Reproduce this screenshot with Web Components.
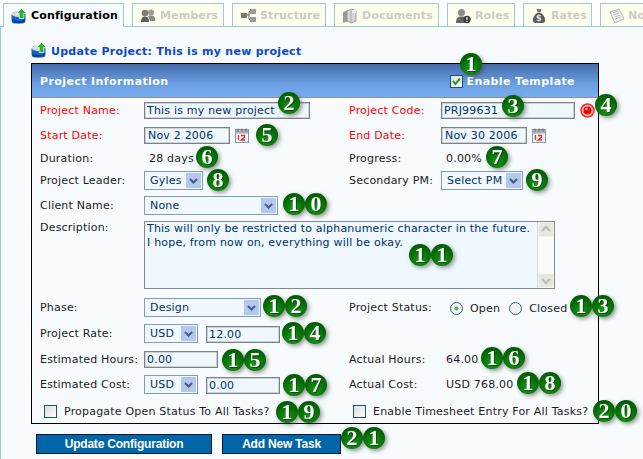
<!DOCTYPE html>
<html>
<head>
<meta charset="utf-8">
<title>Update Project</title>
<style>
  html, body { margin: 0; padding: 0; height: 459px; overflow: hidden; background: #fff; }
  body { position: relative; font: 11px "DejaVu Sans", sans-serif; letter-spacing: .2px; color: #1c1c1c; }
</style>
</head>
<body>

<tab-bar>
  <project-tab active icon="config" w="121">Configuration</project-tab>
  <project-tab icon="members" w="92">Members</project-tab>
  <project-tab icon="structure" w="94">Structure</project-tab>
  <project-tab icon="documents" w="105">Documents</project-tab>
  <project-tab icon="roles" w="68">Roles</project-tab>
  <project-tab icon="rates" w="69">Rates</project-tab>
  <project-tab icon="notes" w="70">No</project-tab>
</tab-bar>
<tab-panel>
  <project-form></project-form>
</tab-panel>

<step-badge n="1" x="471" y="64"></step-badge>
<step-badge n="2" x="289" y="103"></step-badge>
<step-badge n="3" x="513" y="106"></step-badge>
<step-badge n="4" x="606" y="105"></step-badge>
<step-badge n="5" x="267" y="135"></step-badge>
<step-badge n="6" x="207" y="157"></step-badge>
<step-badge n="7" x="497" y="157"></step-badge>
<step-badge n="8" x="218" y="180"></step-badge>
<step-badge n="9" x="537" y="180"></step-badge>
<step-badge n="10" x="294" y="204"></step-badge>
<step-badge n="11" x="420" y="255"></step-badge>
<step-badge n="12" x="274" y="306"></step-badge>
<step-badge n="13" x="581" y="306"></step-badge>
<step-badge n="14" x="293" y="333"></step-badge>
<step-badge n="15" x="233" y="360"></step-badge>
<step-badge n="16" x="492" y="358"></step-badge>
<step-badge n="17" x="294" y="385"></step-badge>
<step-badge n="18" x="528" y="383"></step-badge>
<step-badge n="19" x="287" y="412"></step-badge>
<step-badge n="20" x="604" y="411"></step-badge>
<step-badge n="21" x="352" y="438"></step-badge>

<script>
const ICONS = {
  config: `<rect x="0.500" y="4" width="14" height="11.500" rx="3.500" fill="#1660c8"/><path d="M1 11c2 2.500 10 2.500 13 0v2c-2 3-11 3-13 0z" fill="#0b3f96"/><ellipse cx="7" cy="6" rx="6.300" ry="3" fill="#d5dbe2"/><path d="M10.500 .5l5 5h-2.700v5h-4.600v-5H5.500z" fill="#2fb52a" stroke="#fff" stroke-width=".7"/>`,
  members: `<circle cx="5" cy="5" r="3.300" fill="#7c7c7c"/><circle cx="11" cy="4.500" r="3" fill="#9a9a9a"/><path d="M1 14c0-4 1.500-5.500 4-5.500s4 1.500 4 5.500z" fill="#5e5e5e"/><path d="M8 8c2-1 6-1 7 1.500v3.500h-5z" fill="#8a8a8a"/>`,
  structure: `<rect x="1" y="5" width="6" height="5" fill="#777"/><rect x="10" y="1" width="6" height="5" fill="#999"/><rect x="10" y="9" width="6" height="5" fill="#999"/><path d="M7 7h2M9 3.500h1M9 11.500h1M9 3.500v8" stroke="#666" fill="none"/>`,
  documents: `<path d="M1 4l5-2v11l-5 2z" fill="#9a9a9a"/><path d="M5 3l5-2 4 2v10l-5 2-4-2z" fill="#d6d6d6" stroke="#8a8a8a" stroke-width=".8"/><path d="M9 3v11" stroke="#aaa"/><path d="M10 2h4v3h-4z" fill="#eee"/>`,
  roles: `<circle cx="6.500" cy="4.500" r="3.500" fill="#8a8a8a"/><path d="M1 15c0-5 2-6.500 5.500-6.500S12 10 12 15z" fill="#666"/><circle cx="12" cy="11.500" r="3.700" fill="#3c3c3c"/><path d="M12 9v3M12 13v1" stroke="#fff" stroke-width="1.200"/>`,
  rates: `<path d="M5.500 1h5l-1 3.500h-3z" fill="#777"/><path d="M6 5h4c3 2 4.500 5 4 8-.3 1.500-1.500 2-3 2H5c-1.500 0-2.700-.5-3-2-.5-3 1-6 4-8z" fill="#5c5c5c"/><text x="8" y="13" font-size="8" font-weight="700" text-anchor="middle" fill="#e2e2e2" font-family="DejaVu Sans">$</text>`,
  notes: `<path d="M2 4l9-3 5 10-9 4z" fill="#f2f2ea" stroke="#b5b5b5"/><path d="M4.500 5l6-2M5.500 7l6-2M6.500 9l6-2M7.500 11l5-2" stroke="#bbb"/>`
}

class TabBar extends HTMLElement {
  constructor() {
    super();
    this.attachShadow({ mode: 'open' }).innerHTML = `
      <style>
        :host { display: flex; gap: 8px; height: 26px; padding: 3px 0 0 3px; box-sizing: border-box; background: #fff; white-space: nowrap; }
      </style>
      <slot></slot>`;
  }
}

class ProjectTab extends HTMLElement {
  constructor() {
    super();
    this.attachShadow({ mode: 'open' });
  }
  connectedCallback() {
    const active = this.hasAttribute('active');
    const icon = this.getAttribute('icon');
    this.shadowRoot.innerHTML = `
      <style>
        :host { display: flex; align-items: center; box-sizing: border-box; flex: none; width: ${this.getAttribute('w')}px;
          height: ${active ? 24 : 23}px; padding: ${active ? 0 : 1}px 0 0 7px; gap: 4px; position: relative; z-index: 1;
          border: 1px solid #97cfcf; border-bottom: none;
          background: ${active ? '#f7fbfe' : '#ffffee'}; }
        span { font: bold 11px "DejaVu Sans", sans-serif; letter-spacing: .15px; color: ${active ? '#000' : '#cbcbcb'}; }
        svg { width: 16px; height: 16px; flex: none; }
      </style>
      <svg viewBox="0 0 16 16">${ICONS[icon]}</svg><span><slot></slot></span>`;
  }
}

class TabPanel extends HTMLElement {
  constructor() {
    super();
    this.attachShadow({ mode: 'open' }).innerHTML = `
      <style>
        :host { display: block; height: 433px; box-sizing: border-box; border-top: 1px solid #97cfcf; border-left: 1px solid #97cfcf;
          background: #f7fbfe; padding: 15px 0 0 30px; }
      </style>
      <slot></slot>`;
  }
}

// text box, looks like the old skinned input
class TextBox extends HTMLElement {
  constructor() {
    super();
    this.attachShadow({ mode: 'open' }).innerHTML = `
      <style>
        :host { display: inline-flex; align-items: center; box-sizing: border-box; border: 1px solid #7d8487; box-shadow: inset 0 0 0 .5px #a9adb0;
          height: 17px; padding-left: 2px; background: #eff7ff; color: #003366; font-size: 11px; white-space: pre; overflow: hidden; }
      </style>
      <slot></slot>`;
  }
}

class SelectBox extends HTMLElement {
  constructor() {
    super();
    this.attachShadow({ mode: 'open' }).innerHTML = `
      <style>
        :host { display: inline-flex; align-items: center; justify-content: space-between; box-sizing: border-box; height: 19px;
          border: 1px solid #7f9db9; background: #f2f8ff; color: #003366; font-size: 11px; padding: 0 1px 0 5px; }
        i { display: block; width: 15px; height: 15px; background: #b4c8ee; }
        svg { display: block; width: 15px; height: 15px; }
      </style>
      <slot></slot><i><svg viewBox="0 0 15 15"><path d="M4 6l3.500 3.500L11 6" fill="none" stroke="#445a88" stroke-width="2"/></svg></i>`;
  }
}

class CheckBox extends HTMLElement {
  constructor() {
    super();
    const tick = this.hasAttribute('checked') ? '<svg viewBox="0 0 11 11"><path d="M2 5l2.500 3L9 2.500" fill="none" stroke="#21a121" stroke-width="2"/></svg>' : '';
    this.attachShadow({ mode: 'open' }).innerHTML = `
      <style>
        :host { display: inline-block; box-sizing: border-box; width: 13px; height: 13px; border: 1px solid #1c5180; background: linear-gradient(135deg, #dcdcd7, #fff); flex: none; }
        svg { display: block; width: 11px; height: 11px; }
      </style>${tick}`;
  }
}

class RadioDot extends HTMLElement {
  constructor() {
    super();
    const dot = this.hasAttribute('checked') ? '<circle cx="6.500" cy="6.500" r="2" fill="#46b946"/>' : '';
    this.attachShadow({ mode: 'open' }).innerHTML = `
      <style>
        :host { display: inline-block; width: 13px; height: 13px; flex: none; margin-top: 2px; }
        svg { display: block; width: 13px; height: 13px; }
      </style>
      <svg viewBox="0 0 13 13"><circle cx="6.500" cy="6.500" r="6" fill="#f4f4ef" stroke="#2c5f93"/>${dot}</svg>`;
  }
}

class CalendarIcon extends HTMLElement {
  constructor() {
    super();
    this.attachShadow({ mode: 'open' }).innerHTML = `
      <style>
        :host { display: inline-block; width: 14px; height: 15px; flex: none; }
        svg { display: block; width: 14px; height: 15px; }
      </style>
      <svg viewBox="0 0 14 15"><rect x=".5" y="1.500" width="13" height="13" fill="#eef2fa" stroke="#8c96a8"/><rect x="1" y="2" width="12" height="3.500" fill="#a8afba"/><path d="M3 .5v3M7 .5v3M11 .5v3" stroke="#666"/><path d="M3.500 7v5M6 7.500h3.500v1.700L6 12h4" fill="none" stroke="#ee3322" stroke-width="1.300"/></svg>`;
  }
}

class RequiredIcon extends HTMLElement {
  constructor() {
    super();
    this.attachShadow({ mode: 'open' }).innerHTML = `
      <style>
        :host { display: inline-block; width: 15px; height: 15px; flex: none; }
        svg { display: block; width: 15px; height: 15px; }
      </style>
      <svg viewBox="0 0 15 15"><circle cx="7.500" cy="7.500" r="6.500" fill="#f8b8b8" stroke="#ee2a2a" stroke-width="1.500"/><circle cx="7.500" cy="7.500" r="4" fill="#d80c0c"/><circle cx="6.500" cy="6" r="1.300" fill="#ffa0a0"/></svg>`;
  }
}

class ActionButton extends HTMLElement {
  constructor() {
    super();
    this.attachShadow({ mode: 'open' }).innerHTML = `
      <style>
        :host { display: flex; align-items: center; justify-content: center; box-sizing: border-box; height: 20px; border: 1px solid #001a33;
          background: #0066aa; color: #fff; font: bold 12px "Liberation Sans", sans-serif; letter-spacing: -.2px; }
      </style>
      <slot></slot>`;
  }
}

class FormRow extends HTMLElement {
  constructor() {
    super();
    this.attachShadow({ mode: 'open' }).innerHTML = `
      <style>
        :host { display: grid; grid-template-columns: 104px 205px 92px 1fr; align-items: center; padding-left: 8px; height: var(--h, 25px); }
        div { display: flex; align-items: center; gap: 8px; }
      </style>
      <div><slot name="label"></slot></div><div><slot name="value"></slot></div>
      <div><slot name="label2"></slot></div><div><slot name="value2"></slot></div>`;
  }
}

class ProjectForm extends HTMLElement {
  constructor() {
    super();
    this.attachShadow({ mode: 'open' }).innerHTML = `
      <style>
        :host { display: block; }
        h1 { display: flex; align-items: center; gap: 4px; margin: 0 0 5px; height: 16px; font: bold 11px "DejaVu Sans", sans-serif; letter-spacing: .27px; color: #0b48c4; }
        h1 svg { width: 16px; height: 16px; }
        h1 span { margin-top: 2px; }
        .box { box-sizing: border-box; width: 568px; height: 361px; border: 1px solid #000; background: #f7fbfe; }
        .head { display: flex; align-items: center; justify-content: space-between; box-sizing: border-box; height: 33px; padding: 2px 23px 0 8px;
          background: linear-gradient(#466cac, #6a9ee2 60%, #78aff0); color: #fff; font-weight: bold; letter-spacing: .4px; }
        .line { height: 1px; background: #8a8f96; }
        .head label { display: flex; align-items: center; gap: 4px; }
        .red { color: #f00; }
        .low { margin-top: 2px; }
        .textarea { display: block; position: relative; box-sizing: border-box; width: 411px; height: 68px; margin-top: 3px; border: 1px solid #85898c; background: #eff7ff;
          color: #003366; padding: 0 2px; line-height: 14px; white-space: pre; overflow: hidden; }
        .bar { position: absolute; top: 0; right: 0; width: 16px; height: 100%; display: flex; flex-direction: column; justify-content: space-between;
          background: #fafbfa; border-left: 1px solid #d8d8d0; }
        .bar i { display: block; height: 15px; background: #e4e8e2; border: 1px solid #f6f6f0; box-sizing: border-box; }
        .bar svg { display: block; width: 14px; height: 13px; }
        .check { display: flex; align-items: center; gap: 7px; white-space: nowrap; }
        .left { padding-left: 4px; }
        .buttons { display: flex; gap: 10px; margin: 10px 0 0 5px; }
        .open { display: flex; align-items: center; gap: 7px; margin-left: 9px; }
        .open span { margin-top: 3px; margin-right: 2px; }
        .desc-row { display: grid; grid-template-columns: 104px 1fr; padding-left: 8px; height: 76px; }
      </style>
      <h1><svg viewBox="0 0 16 16">${ICONS.config}</svg><span>Update Project: This is my new project</span></h1>
      <div class="box">
        <div class="head">
          <span>Project Information</span>
          <label><check-box checked></check-box>Enable Template</label>
        </div>
        <div class="line"></div>
        <form-row style="--h:25px">
          <span slot="label" class="red">Project Name:</span>
          <text-box slot="value" style="width:166px">This is my new project</text-box>
          <span slot="label2" class="red">Project Code:</span>
          <text-box slot="value2" style="width:134px">PRJ99631</text-box>
          <required-icon slot="value2" style="margin-left:-3px"></required-icon>
        </form-row>
        <form-row style="--h:25px">
          <span slot="label" class="red">Start Date:</span>
          <text-box slot="value" style="width:86px;padding-left:3px">Nov 2 2006</text-box>
          <calendar-icon slot="value" style="margin-left:-3px"></calendar-icon>
          <span slot="label2" class="red">End Date:</span>
          <text-box slot="value2" style="width:86px;padding-left:3px">Nov 30 2006</text-box>
          <calendar-icon slot="value2" style="margin-left:-3px"></calendar-icon>
        </form-row>
        <form-row style="--h:20px">
          <span slot="label">Duration:</span>
          <span slot="value" style="margin-left:5px">28 days</span>
          <span slot="label2">Progress:</span>
          <span slot="value2" style="margin-left:5px">0.00%</span>
        </form-row>
        <form-row style="--h:24px">
          <span slot="label">Project Leader:</span>
          <select-box slot="value" style="width:59px">Gyles</select-box>
          <span slot="label2">Secondary PM:</span>
          <select-box slot="value2" style="width:82px">Select PM</select-box>
        </form-row>
        <form-row style="--h:26px">
          <span slot="label">Client Name:</span>
          <select-box slot="value" style="width:134px">None</select-box>
        </form-row>
        <div class="desc-row">
          <span style="margin-top:3px">Description:</span>
          <div class="textarea">This will only be restricted to alphanumeric character in the future.
I hope, from now on, everything will be okay.<div class="bar"><i><svg viewBox="0 0 14 13"><path d="M3 8l4-4 4 4" fill="none" stroke="#b9bdb4" stroke-width="2"/></svg></i><i><svg viewBox="0 0 14 13"><path d="M3 5l4 4 4-4" fill="none" stroke="#b9bdb4" stroke-width="2"/></svg></i></div></div>
        </div>
        <form-row style="--h:26px">
          <span slot="label">Phase:</span>
          <select-box slot="value" style="width:117px">Design</select-box>
          <span slot="label2">Project Status:</span>
          <div slot="value2" class="open"><radio-dot checked></radio-dot><span>Open</span><radio-dot></radio-dot><span>Closed</span></div>
        </form-row>
        <form-row style="--h:26px">
          <span slot="label">Project Rate:</span>
          <select-box slot="value" style="width:54px">USD</select-box>
          <text-box slot="value" style="width:74px;margin-top:2px">12.00</text-box>
        </form-row>
        <form-row style="--h:25px">
          <span slot="label" class="low">Estimated Hours:</span>
          <text-box slot="value" class="low" style="width:74px">0.00</text-box>
          <span slot="label2" class="low">Actual Hours:</span>
          <span slot="value2" class="low" style="margin-left:5px">64.00</span>
        </form-row>
        <form-row style="--h:26px">
          <span slot="label">Estimated Cost:</span>
          <select-box slot="value" style="width:54px">USD</select-box>
          <text-box slot="value" style="width:74px;margin-top:2px">0.00</text-box>
          <span slot="label2">Actual Cost:</span>
          <span slot="value2" style="margin-left:5px">USD 768.00</span>
        </form-row>
        <form-row style="--h:26px">
          <div slot="label" class="check left low"><check-box></check-box><span>Propagate Open Status To All Tasks?</span></div>
          <div slot="label2" class="check low" style="margin-left:4px"><check-box></check-box><span>Enable Timesheet Entry For All Tasks?</span></div>
        </form-row>
      </div>
      <div class="buttons">
        <action-button style="width:176px">Update Configuration</action-button>
        <action-button style="width:119px">Add New Task</action-button>
      </div>`;
  }
}

// numbered callout laid over the screenshot, x/y is the centre of the first digit
class StepBadge extends HTMLElement {
  constructor() {
    super();
    this.attachShadow({ mode: 'open' });
  }
  connectedCallback() {
    const x = +this.getAttribute('x') - 11, y = +this.getAttribute('y') - 11;
    const digits = [...this.getAttribute('n')].map(d => `<b>${d}</b>`).join('');
    this.shadowRoot.innerHTML = `
      <style>
        :host { position: absolute; left: ${x}px; top: ${y}px; display: flex; z-index: 5; filter: drop-shadow(2px 2px 2px rgba(60,70,60,.55)); }
        b { display: flex; align-items: center; justify-content: center; width: 22px; height: 22px; border-radius: 50%; letter-spacing: 0;
          background: radial-gradient(circle at 50% 72%, #1a961a, #077007 50%, #004a00);
          color: #fff; font: bold 22px/22px "Liberation Serif", serif; text-shadow: 1px 1px 0 rgba(0,40,0,.6); }
      </style>${digits}`;
  }
}

customElements.define('tab-bar', TabBar);
customElements.define('project-tab', ProjectTab);
customElements.define('tab-panel', TabPanel);
customElements.define('text-box', TextBox);
customElements.define('select-box', SelectBox);
customElements.define('check-box', CheckBox);
customElements.define('radio-dot', RadioDot);
customElements.define('calendar-icon', CalendarIcon);
customElements.define('required-icon', RequiredIcon);
customElements.define('action-button', ActionButton);
customElements.define('form-row', FormRow);
customElements.define('project-form', ProjectForm);
customElements.define('step-badge', StepBadge);
</script>
</body>
</html>
